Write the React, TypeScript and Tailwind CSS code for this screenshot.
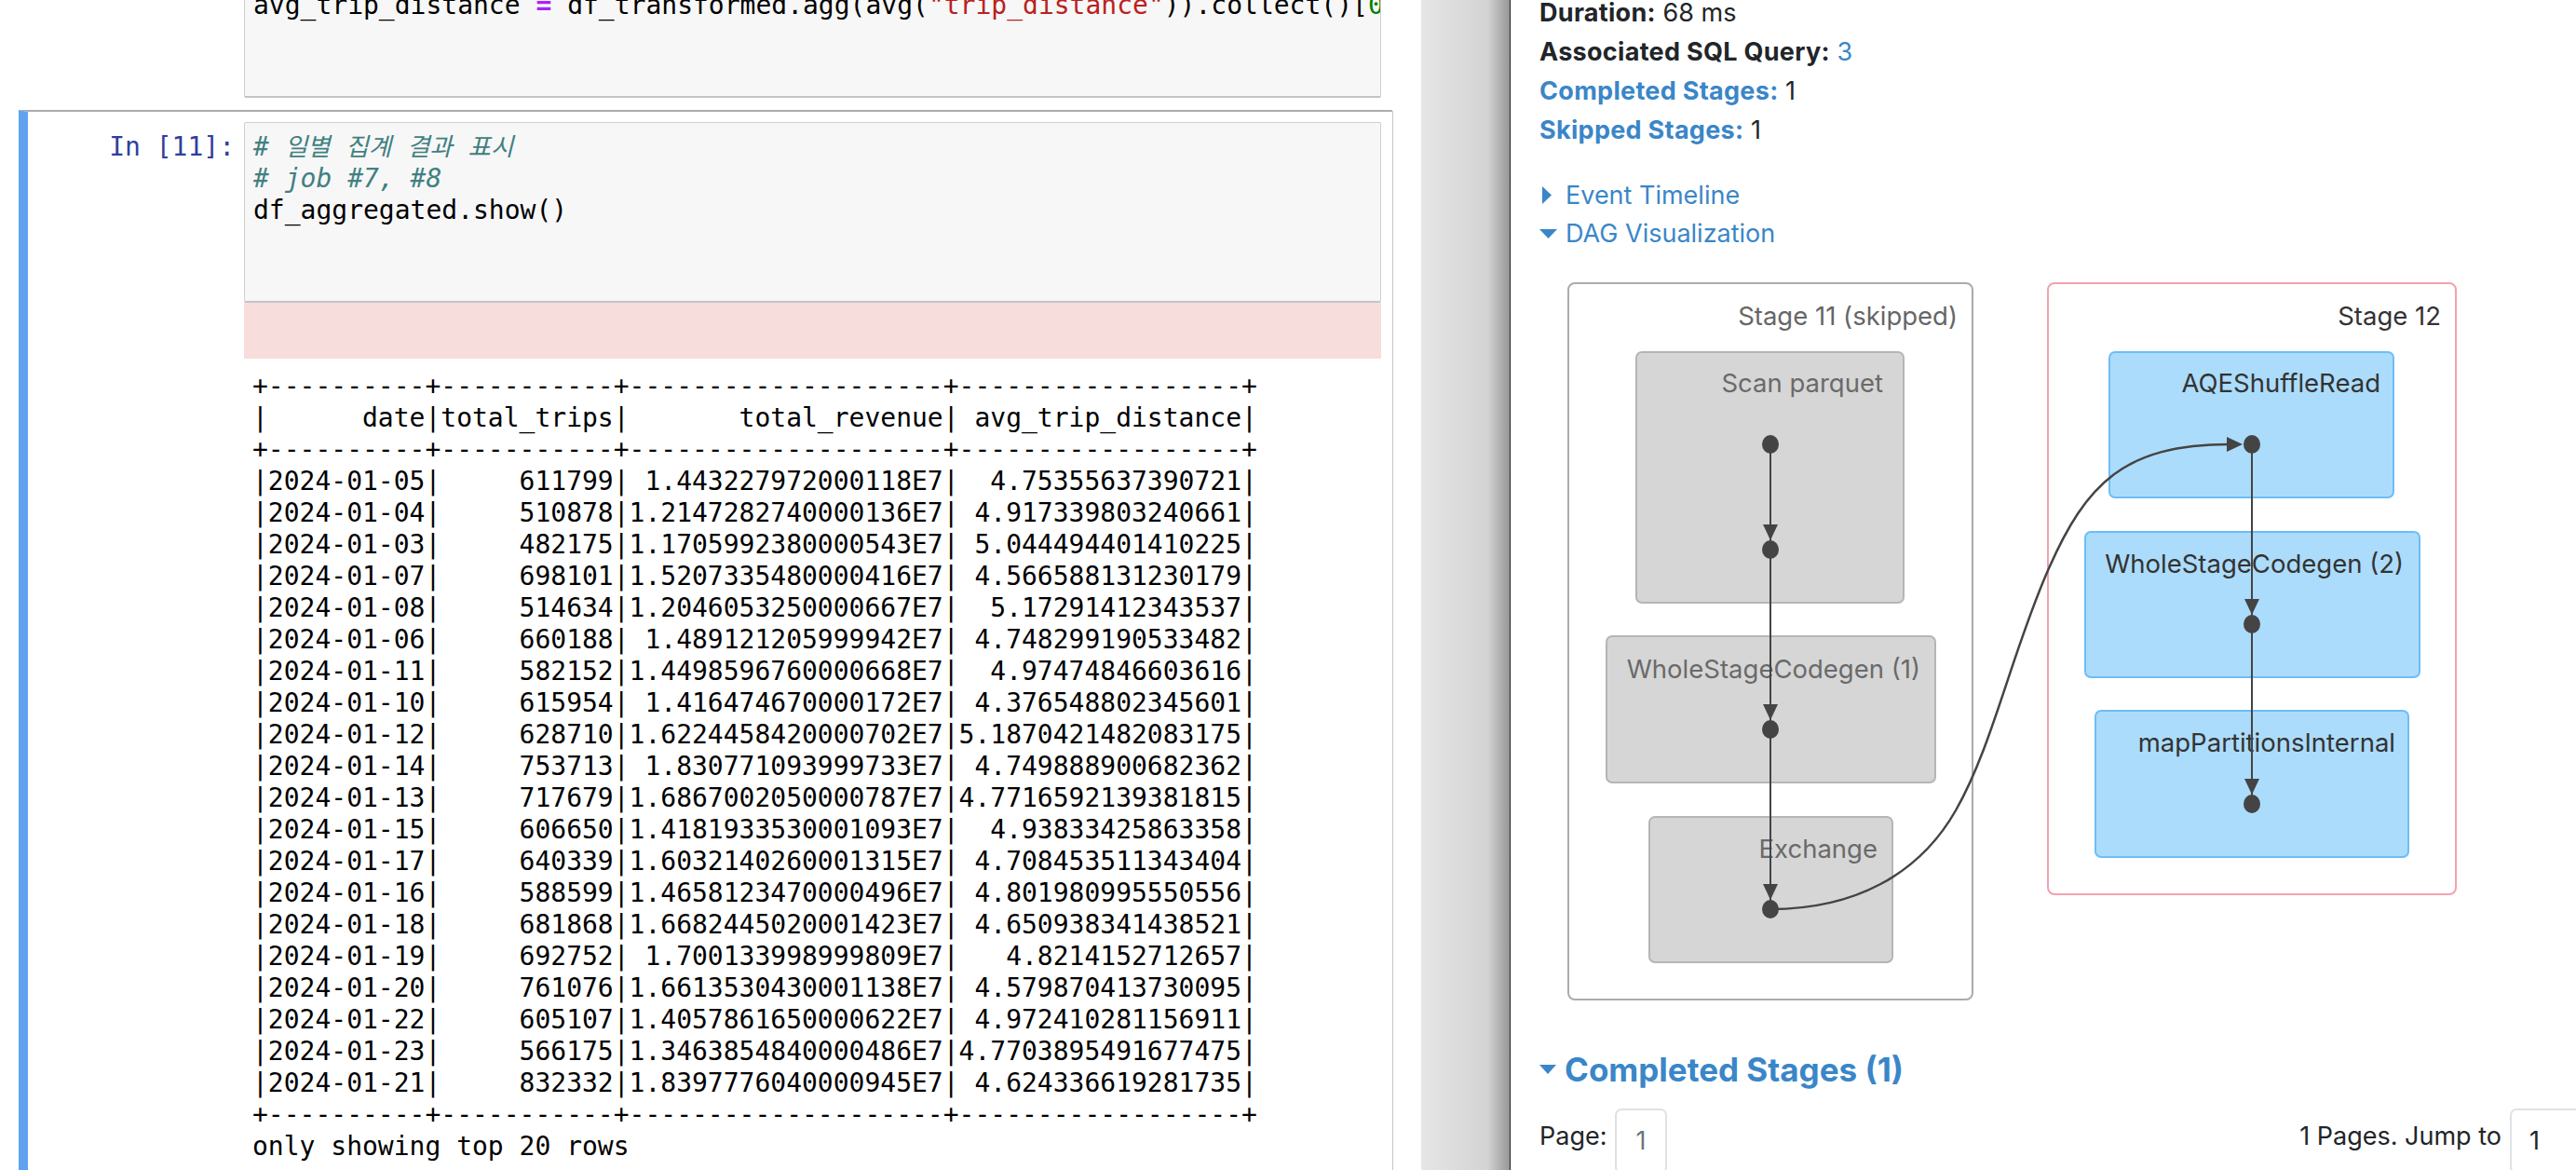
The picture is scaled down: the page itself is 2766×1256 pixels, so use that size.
const rows: [string, number, string, string][] = [
  ["2024-01-05", 611799, "1.443227972000118E7", "4.75355637390721"],
  ["2024-01-04", 510878, "1.2147282740000136E7", "4.917339803240661"],
  ["2024-01-03", 482175, "1.1705992380000543E7", "5.044494401410225"],
  ["2024-01-07", 698101, "1.5207335480000416E7", "4.566588131230179"],
  ["2024-01-08", 514634, "1.2046053250000667E7", "5.17291412343537"],
  ["2024-01-06", 660188, "1.489121205999942E7", "4.748299190533482"],
  ["2024-01-11", 582152, "1.4498596760000668E7", "4.97474846603616"],
  ["2024-01-10", 615954, "1.416474670000172E7", "4.376548802345601"],
  ["2024-01-12", 628710, "1.6224458420000702E7", "5.1870421482083175"],
  ["2024-01-14", 753713, "1.830771093999733E7", "4.749888900682362"],
  ["2024-01-13", 717679, "1.6867002050000787E7", "4.7716592139381815"],
  ["2024-01-15", 606650, "1.4181933530001093E7", "4.93833425863358"],
  ["2024-01-17", 640339, "1.6032140260001315E7", "4.708453511343404"],
  ["2024-01-16", 588599, "1.4658123470000496E7", "4.801980995550556"],
  ["2024-01-18", 681868, "1.6682445020001423E7", "4.650938341438521"],
  ["2024-01-19", 692752, "1.700133998999809E7", "4.8214152712657"],
  ["2024-01-20", 761076, "1.6613530430001138E7", "4.579870413730095"],
  ["2024-01-22", 605107, "1.4057861650000622E7", "4.972410281156911"],
  ["2024-01-23", 566175, "1.3463854840000486E7", "4.7703895491677475"],
  ["2024-01-21", 832332, "1.8397776040000945E7", "4.624336619281735"],
];

const sep = "+----------+-----------+--------------------+------------------+";
const header = "|      date|total_trips|       total_revenue| avg_trip_distance|";
const tableText = [
  sep,
  header,
  sep,
  ...rows.map(
    (r) => `|${r[0]}|${String(r[1]).padStart(11)}|${r[2].padStart(20)}|${r[3].padStart(18)}|`
  ),
  sep,
  "only showing top 20 rows",
].join("\n");

// dag nodes, page coordinates
const skippedNodes = [
  { label: "Scan parquet", x: 1757, y: 378, w: 287, h: 269, lx: 2022, ly: 413 },
  { label: "WholeStageCodegen (1)", x: 1725, y: 683, w: 353, h: 157, lx: 2062, ly: 720 },
  { label: "Exchange", x: 1771, y: 877, w: 261, h: 156, lx: 2016, ly: 913 },
];
const activeNodes = [
  { label: "AQEShuffleRead", x: 2265, y: 378, w: 305, h: 156, lx: 2556, ly: 413 },
  { label: "WholeStageCodegen (2)", x: 2239, y: 571, w: 359, h: 156, lx: 2581, ly: 607 },
  { label: "mapPartitionsInternal", x: 2250, y: 763, w: 336, h: 157, lx: 2572, ly: 799 },
];

function DownArrow({ x, y }: { x: number; y: number }) {
  // tip touches the top of the dot at y
  return <polygon points={`${x - 8},${y - 27} ${x + 8},${y - 27} ${x},${y - 10}`} fill="#444" />;
}

function Dag() {
  return (
    <svg width={1144} height={829} viewBox="1622 271 1144 829" className="block" fontFamily="Inter, sans-serif" fontSize={27.5}>
      <rect x={1684} y={304} width={434} height={769} rx={7} fill="#fff" stroke="#ababab" strokeWidth={2} />
      <text x={2102} y={341} textAnchor="end" dominantBaseline="middle" fill="#666">Stage 11 (skipped)</text>
      <rect x={2199} y={304} width={438} height={656} rx={7} fill="#fff" stroke="#f2a2ad" strokeWidth={2} />
      <text x={2621} y={341} textAnchor="end" dominantBaseline="middle" fill="#333">Stage 12</text>

      {skippedNodes.map((n) => (
        <g key={n.label}>
          <rect x={n.x} y={n.y} width={n.w} height={n.h} rx={6} fill="#d6d6d6" stroke="#b5b5b5" strokeWidth={2} />
          <text x={n.lx} y={n.ly} textAnchor="end" dominantBaseline="middle" fill="#6a6a6a">{n.label}</text>
        </g>
      ))}
      {activeNodes.map((n) => (
        <g key={n.label}>
          <rect x={n.x} y={n.y} width={n.w} height={n.h} rx={6} fill="#acdcfb" stroke="#6dbdf6" strokeWidth={2} />
          <text x={n.lx} y={n.ly} textAnchor="end" dominantBaseline="middle" fill="#333">{n.label}</text>
        </g>
      ))}

      <line x1={1901} y1={477} x2={1901} y2={976} stroke="#444" strokeWidth={2} />
      <line x1={2418} y1={477} x2={2418} y2={863} stroke="#444" strokeWidth={2} />
      <path d="M1901,976 C1990,976 2060,940 2100,870 S2160,700 2200,610 S2280,477 2394,477" fill="none" stroke="#444" strokeWidth={2.5} />
      <polygon points="2391,469 2391,485 2408,477" fill="#444" />

      <DownArrow x={1901} y={590} />
      <DownArrow x={1901} y={783} />
      <DownArrow x={1901} y={976} />
      <DownArrow x={2418} y={670} />
      <DownArrow x={2418} y={863} />

      {[477, 590, 783, 976].map((cy) => (
        <ellipse key={"a" + cy} cx={1901} cy={cy} rx={9} ry={10} fill="#444" />
      ))}
      {[477, 670, 863].map((cy) => (
        <ellipse key={"b" + cy} cx={2418} cy={cy} rx={9} ry={10} fill="#444" />
      ))}
    </svg>
  );
}

export default function App() {
  return (
    <div className="flex w-[2766px] h-[1256px] overflow-hidden bg-white">
      {/* notebook */}
      <div className="w-[1526px] shrink-0 h-full overflow-hidden bg-white font-['DejaVu_Sans_Mono','Noto_Sans_CJK_KR',monospace] text-[28px] leading-[34px] text-black">
        {/* previous cell, scrolled mostly out of view */}
        <div className="ml-[262px] w-[1221px] h-[126px] -mt-[21px] border border-[#cfcfcf] border-b-2 border-b-[#c4c4c4] rounded-[2px] bg-[#f7f7f7] pl-[9px] pt-[9px] overflow-hidden whitespace-pre">
          avg_trip_distance <span className="text-[#aa22ff] font-bold">=</span> df_transformed.agg(avg(
          <span className="text-[#ba2121]">"trip_distance"</span>)).collect()[<span className="text-[#008000]">0</span>][<span className="text-[#008000]">0</span>]
        </div>

        {/* selected cell */}
        <div className="mt-[13px] ml-[20px] w-[1476px] h-[1200px] border-t-2 border-r border-l-[10px] border-t-[#ababab] border-r-[#c6c6c6] border-l-[#5fa3f0] rounded-tr-[3px] pt-[11px]">
          <div className="flex">
            <div className="w-[232px] shrink-0 pr-[10px] pt-[10px] text-right text-[#303f9f] whitespace-pre">In [11]:</div>
            <div className="w-[1221px] h-[194px] border border-[#cfcfcf] border-b-2 border-b-[#c4c4c4] rounded-[2px] bg-[#f7f7f7] pl-[9px] pt-[9px] whitespace-pre">
              <div className="italic text-[#408080]">
                # <span className="text-[26.5px]">일별</span> <span className="text-[26.5px]">집계</span>{" "}
                <span className="text-[26.5px]">결과</span> <span className="text-[26.5px]">표시</span>
              </div>
              <div className="italic text-[#408080]"># job #7, #8</div>
              <div>df_aggregated.show()</div>
            </div>
          </div>
          <div className="ml-[232px] w-[1221px] h-[60px] bg-[#f8dddd]" />
          <pre className="ml-[241px] mt-[13px] font-['DejaVu_Sans_Mono',monospace] text-[28px] leading-[34px] text-black">{tableText}</pre>
        </div>
      </div>

      {/* window shadow */}
      <div className="w-[95px] shrink-0 h-full bg-linear-to-r from-[#e6e6e6] via-[#d3d3d3] via-75% to-[#979797]" />

      {/* spark ui */}
      <div className="w-[1145px] shrink-0 h-full overflow-hidden border-l border-l-[#222] bg-white font-['Inter',sans-serif] text-[27px] text-[#212529]">
        <div className="pl-[31px] -mt-[7px] leading-[42px]">
          <div>
            <span className="font-bold tracking-[0.3px]">Duration:</span> 68 ms
          </div>
          <div>
            <span className="font-bold tracking-[0.3px]">Associated SQL Query:</span> <span className="text-[#3a86c8]">3</span>
          </div>
          <div>
            <span className="font-bold tracking-[0.3px] text-[#3a86c8]">Completed Stages:</span> 1
          </div>
          <div>
            <span className="font-bold tracking-[0.3px] text-[#3a86c8]">Skipped Stages:</span> 1
          </div>
        </div>

        <div className="pl-[31px] mt-[28px] leading-[41px] text-[#3a86c8]">
          <div className="flex items-center">
            <svg width="10" height="19" viewBox="0 0 10 19" className="ml-[3px] mr-[15px]">
              <polygon points="0,0 10,9.5 0,19" fill="#3a86c8" />
            </svg>
            Event Timeline
          </div>
          <div className="flex items-center">
            <svg width="19" height="10" viewBox="0 0 19 10" className="mr-[9px]">
              <polygon points="0,0 19,0 9.5,10" fill="#3a86c8" />
            </svg>
            DAG Visualization
          </div>
        </div>

        <Dag />

        <div className="pl-[31px] mt-[24px] flex items-center text-[35px] leading-[48px] font-bold text-[#3a86c8]">
          <svg width="18" height="10" viewBox="0 0 18 10" className="mr-[9px]">
            <polygon points="0,0 18,0 9,10" fill="#3a86c8" />
          </svg>
          Completed Stages (1)
        </div>

        <div className="pl-[31px] mt-[18px] flex items-start">
          <div className="w-[81px] h-[60px] leading-[60px]">Page:</div>
          <div className="w-[56px] h-[70px] border-2 border-[#dee2e6] rounded-[7px] pt-[13px] text-center text-[#6c757d]">1</div>
          <div className="ml-auto flex items-start -mr-[9px]">
            <div className="h-[60px] leading-[60px] mr-[9px]">1 Pages. Jump to</div>
            <div className="w-[80px] h-[70px] border-2 border-[#dee2e6] rounded-[7px] pt-[13px] pl-[19px]">1</div>
          </div>
        </div>
      </div>
    </div>
  );
}
